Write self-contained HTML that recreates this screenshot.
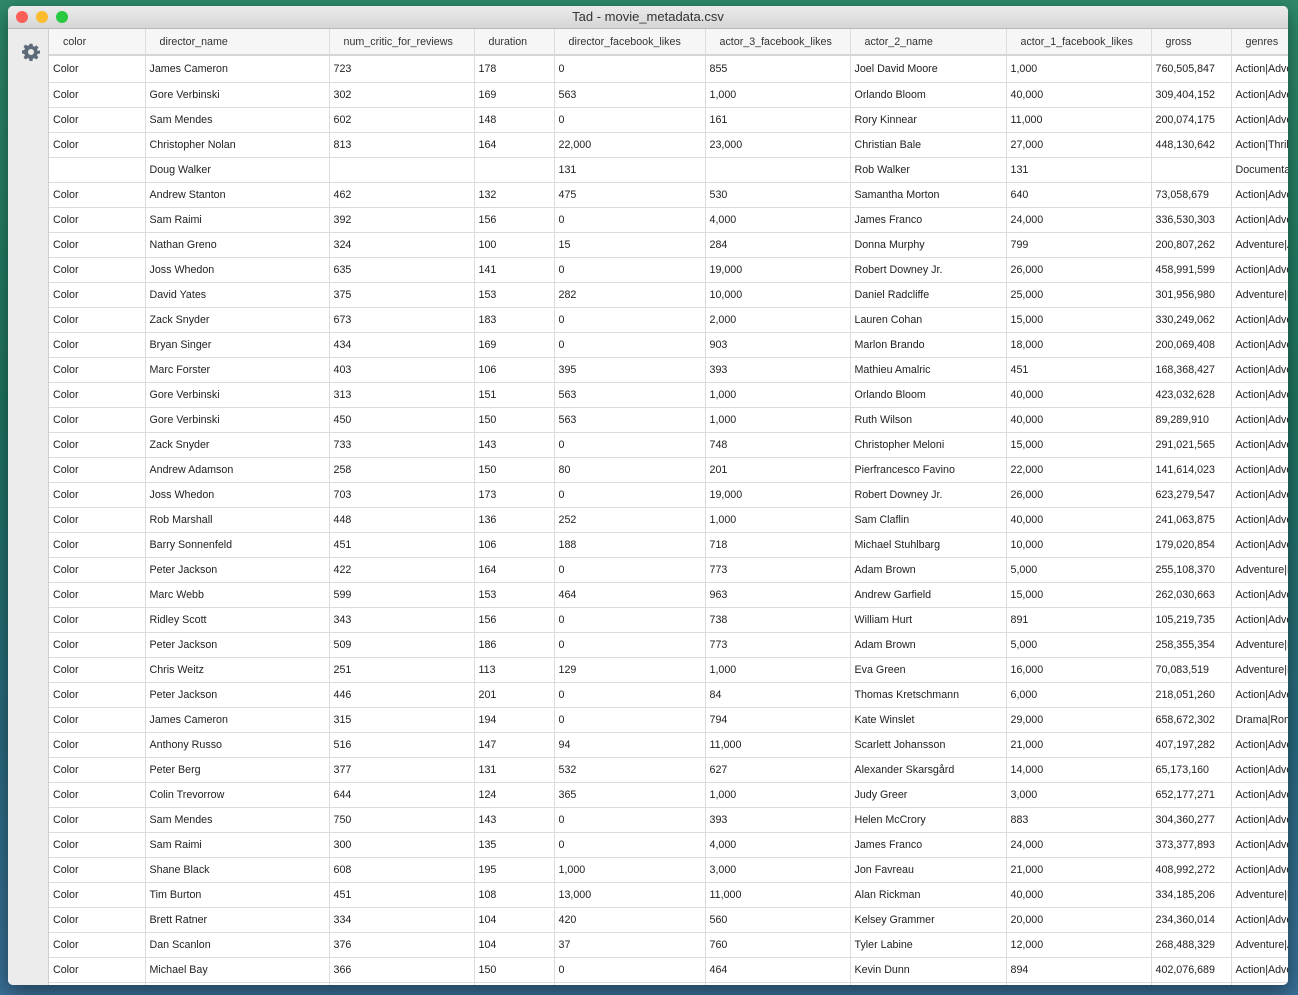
<!DOCTYPE html>
<html><head><meta charset="utf-8"><style>
body{margin:0;width:1298px;height:995px;overflow:hidden;background:linear-gradient(180deg,#2e8a6a 0%,#1f7560 40%,#2a6a80 75%,#3a6f96 100%);font-family:"Liberation Sans",sans-serif;}
.win{position:absolute;left:8px;top:6px;width:1280px;height:979px;background:#fff;border-radius:5px;overflow:hidden;box-shadow:0 6px 20px rgba(0,0,0,.45);}
.tb{position:absolute;left:0;top:0;width:1280px;height:22px;background:linear-gradient(#ebebeb,#d6d6d6);border-bottom:1px solid #b9b9b9;text-align:center;font-size:13px;line-height:22px;color:#333;}
.dot{position:absolute;top:5px;width:12px;height:12px;border-radius:50%;}
.side{position:absolute;left:0;top:23px;width:40px;height:956px;background:#ececec;border-right:1px solid #cfcfcf;}
.tw{position:absolute;left:41px;top:23px;width:1239px;height:956px;overflow:hidden;}
table{border-collapse:collapse;table-layout:fixed;width:1296px;font-size:10.7px;color:#222;}
td,th{border:1px solid #dcdcdc;height:24px;padding:0 0 0 4px;white-space:nowrap;overflow:hidden;text-align:left;font-weight:normal;}
th{background:#f6f6f6;text-align:left;padding-left:14px;height:24px;border-bottom:2px solid #d6d6d6;border-top:none;color:#333;}
tr td:first-child,tr th:first-child{border-left:none}
</style></head><body>
<div class="win">
<div class="tb"><div class="dot" style="left:8px;background:#fc5f57"></div><div class="dot" style="left:28px;background:#fdbc2e"></div><div class="dot" style="left:48px;background:#28c840"></div>Tad - movie_metadata.csv</div>
<div class="side"><svg style="position:absolute;left:14px;top:14px" width="18" height="18" viewBox="0 0 24 24"><path fill="#5d6b78" d="M10 1h4l.6 3.2 1.9.8 2.7-1.9 2.8 2.8-1.9 2.7.8 1.9L24 10v4l-3.2.6-.8 1.9 1.9 2.7-2.8 2.8-2.7-1.9-1.9.8L14 24h-4l-.6-3.1-1.9-.8-2.7 1.9-2.8-2.8 1.9-2.7-.8-1.9L0 14v-4l3.1-.6.8-1.9L2 4.8 4.8 2l2.7 1.9 1.9-.8zM12 8a4 4 0 100 8 4 4 0 000-8z"/></svg></div>
<div class="tw"><table>
<colgroup><col style="width:96px"><col style="width:184px"><col style="width:145px"><col style="width:80px"><col style="width:151px"><col style="width:145px"><col style="width:156px"><col style="width:145px"><col style="width:80px"><col style="width:114px"></colgroup>
<tr><th style="height:25px">color</th><th>director_name</th><th>num_critic_for_reviews</th><th>duration</th><th>director_facebook_likes</th><th>actor_3_facebook_likes</th><th>actor_2_name</th><th>actor_1_facebook_likes</th><th>gross</th><th>genres</th></tr>
<tr><td style="height:26px">Color</td><td>James Cameron</td><td>723</td><td>178</td><td>0</td><td>855</td><td>Joel David Moore</td><td>1,000</td><td>760,505,847</td><td>Action|Adventure</td></tr>
<tr><td>Color</td><td>Gore Verbinski</td><td>302</td><td>169</td><td>563</td><td>1,000</td><td>Orlando Bloom</td><td>40,000</td><td>309,404,152</td><td>Action|Adventure</td></tr>
<tr><td>Color</td><td>Sam Mendes</td><td>602</td><td>148</td><td>0</td><td>161</td><td>Rory Kinnear</td><td>11,000</td><td>200,074,175</td><td>Action|Adventure</td></tr>
<tr><td>Color</td><td>Christopher Nolan</td><td>813</td><td>164</td><td>22,000</td><td>23,000</td><td>Christian Bale</td><td>27,000</td><td>448,130,642</td><td>Action|Thriller</td></tr>
<tr><td></td><td>Doug Walker</td><td></td><td></td><td>131</td><td></td><td>Rob Walker</td><td>131</td><td></td><td>Documentary</td></tr>
<tr><td>Color</td><td>Andrew Stanton</td><td>462</td><td>132</td><td>475</td><td>530</td><td>Samantha Morton</td><td>640</td><td>73,058,679</td><td>Action|Adventure</td></tr>
<tr><td>Color</td><td>Sam Raimi</td><td>392</td><td>156</td><td>0</td><td>4,000</td><td>James Franco</td><td>24,000</td><td>336,530,303</td><td>Action|Adventure</td></tr>
<tr><td>Color</td><td>Nathan Greno</td><td>324</td><td>100</td><td>15</td><td>284</td><td>Donna Murphy</td><td>799</td><td>200,807,262</td><td>Adventure|Ani</td></tr>
<tr><td>Color</td><td>Joss Whedon</td><td>635</td><td>141</td><td>0</td><td>19,000</td><td>Robert Downey Jr.</td><td>26,000</td><td>458,991,599</td><td>Action|Adventure</td></tr>
<tr><td>Color</td><td>David Yates</td><td>375</td><td>153</td><td>282</td><td>10,000</td><td>Daniel Radcliffe</td><td>25,000</td><td>301,956,980</td><td>Adventure|Fam</td></tr>
<tr><td>Color</td><td>Zack Snyder</td><td>673</td><td>183</td><td>0</td><td>2,000</td><td>Lauren Cohan</td><td>15,000</td><td>330,249,062</td><td>Action|Adventure</td></tr>
<tr><td>Color</td><td>Bryan Singer</td><td>434</td><td>169</td><td>0</td><td>903</td><td>Marlon Brando</td><td>18,000</td><td>200,069,408</td><td>Action|Adventure</td></tr>
<tr><td>Color</td><td>Marc Forster</td><td>403</td><td>106</td><td>395</td><td>393</td><td>Mathieu Amalric</td><td>451</td><td>168,368,427</td><td>Action|Adventure</td></tr>
<tr><td>Color</td><td>Gore Verbinski</td><td>313</td><td>151</td><td>563</td><td>1,000</td><td>Orlando Bloom</td><td>40,000</td><td>423,032,628</td><td>Action|Adventure</td></tr>
<tr><td>Color</td><td>Gore Verbinski</td><td>450</td><td>150</td><td>563</td><td>1,000</td><td>Ruth Wilson</td><td>40,000</td><td>89,289,910</td><td>Action|Adventure</td></tr>
<tr><td>Color</td><td>Zack Snyder</td><td>733</td><td>143</td><td>0</td><td>748</td><td>Christopher Meloni</td><td>15,000</td><td>291,021,565</td><td>Action|Adventure</td></tr>
<tr><td>Color</td><td>Andrew Adamson</td><td>258</td><td>150</td><td>80</td><td>201</td><td>Pierfrancesco Favino</td><td>22,000</td><td>141,614,023</td><td>Action|Adventure</td></tr>
<tr><td>Color</td><td>Joss Whedon</td><td>703</td><td>173</td><td>0</td><td>19,000</td><td>Robert Downey Jr.</td><td>26,000</td><td>623,279,547</td><td>Action|Adventure</td></tr>
<tr><td>Color</td><td>Rob Marshall</td><td>448</td><td>136</td><td>252</td><td>1,000</td><td>Sam Claflin</td><td>40,000</td><td>241,063,875</td><td>Action|Adventure</td></tr>
<tr><td>Color</td><td>Barry Sonnenfeld</td><td>451</td><td>106</td><td>188</td><td>718</td><td>Michael Stuhlbarg</td><td>10,000</td><td>179,020,854</td><td>Action|Adventure</td></tr>
<tr><td>Color</td><td>Peter Jackson</td><td>422</td><td>164</td><td>0</td><td>773</td><td>Adam Brown</td><td>5,000</td><td>255,108,370</td><td>Adventure|Fan</td></tr>
<tr><td>Color</td><td>Marc Webb</td><td>599</td><td>153</td><td>464</td><td>963</td><td>Andrew Garfield</td><td>15,000</td><td>262,030,663</td><td>Action|Adventure</td></tr>
<tr><td>Color</td><td>Ridley Scott</td><td>343</td><td>156</td><td>0</td><td>738</td><td>William Hurt</td><td>891</td><td>105,219,735</td><td>Action|Adventure</td></tr>
<tr><td>Color</td><td>Peter Jackson</td><td>509</td><td>186</td><td>0</td><td>773</td><td>Adam Brown</td><td>5,000</td><td>258,355,354</td><td>Adventure|Fan</td></tr>
<tr><td>Color</td><td>Chris Weitz</td><td>251</td><td>113</td><td>129</td><td>1,000</td><td>Eva Green</td><td>16,000</td><td>70,083,519</td><td>Adventure|Fam</td></tr>
<tr><td>Color</td><td>Peter Jackson</td><td>446</td><td>201</td><td>0</td><td>84</td><td>Thomas Kretschmann</td><td>6,000</td><td>218,051,260</td><td>Action|Adventure</td></tr>
<tr><td>Color</td><td>James Cameron</td><td>315</td><td>194</td><td>0</td><td>794</td><td>Kate Winslet</td><td>29,000</td><td>658,672,302</td><td>Drama|Romance</td></tr>
<tr><td>Color</td><td>Anthony Russo</td><td>516</td><td>147</td><td>94</td><td>11,000</td><td>Scarlett Johansson</td><td>21,000</td><td>407,197,282</td><td>Action|Adventure</td></tr>
<tr><td>Color</td><td>Peter Berg</td><td>377</td><td>131</td><td>532</td><td>627</td><td>Alexander Skarsgård</td><td>14,000</td><td>65,173,160</td><td>Action|Adventure</td></tr>
<tr><td>Color</td><td>Colin Trevorrow</td><td>644</td><td>124</td><td>365</td><td>1,000</td><td>Judy Greer</td><td>3,000</td><td>652,177,271</td><td>Action|Adventure</td></tr>
<tr><td>Color</td><td>Sam Mendes</td><td>750</td><td>143</td><td>0</td><td>393</td><td>Helen McCrory</td><td>883</td><td>304,360,277</td><td>Action|Adventure</td></tr>
<tr><td>Color</td><td>Sam Raimi</td><td>300</td><td>135</td><td>0</td><td>4,000</td><td>James Franco</td><td>24,000</td><td>373,377,893</td><td>Action|Adventure</td></tr>
<tr><td>Color</td><td>Shane Black</td><td>608</td><td>195</td><td>1,000</td><td>3,000</td><td>Jon Favreau</td><td>21,000</td><td>408,992,272</td><td>Action|Adventure</td></tr>
<tr><td>Color</td><td>Tim Burton</td><td>451</td><td>108</td><td>13,000</td><td>11,000</td><td>Alan Rickman</td><td>40,000</td><td>334,185,206</td><td>Adventure|Fam</td></tr>
<tr><td>Color</td><td>Brett Ratner</td><td>334</td><td>104</td><td>420</td><td>560</td><td>Kelsey Grammer</td><td>20,000</td><td>234,360,014</td><td>Action|Adventure</td></tr>
<tr><td>Color</td><td>Dan Scanlon</td><td>376</td><td>104</td><td>37</td><td>760</td><td>Tyler Labine</td><td>12,000</td><td>268,488,329</td><td>Adventure|Ani</td></tr>
<tr><td>Color</td><td>Michael Bay</td><td>366</td><td>150</td><td>0</td><td>464</td><td>Kevin Dunn</td><td>894</td><td>402,076,689</td><td>Action|Adventure</td></tr>
<tr><td>Color</td><td>Marc Webb</td><td>0</td><td>0</td><td>0</td><td>0</td><td>x</td><td>0</td><td>0</td><td>x</td></tr>
</table></div>
</div>
</body></html>
